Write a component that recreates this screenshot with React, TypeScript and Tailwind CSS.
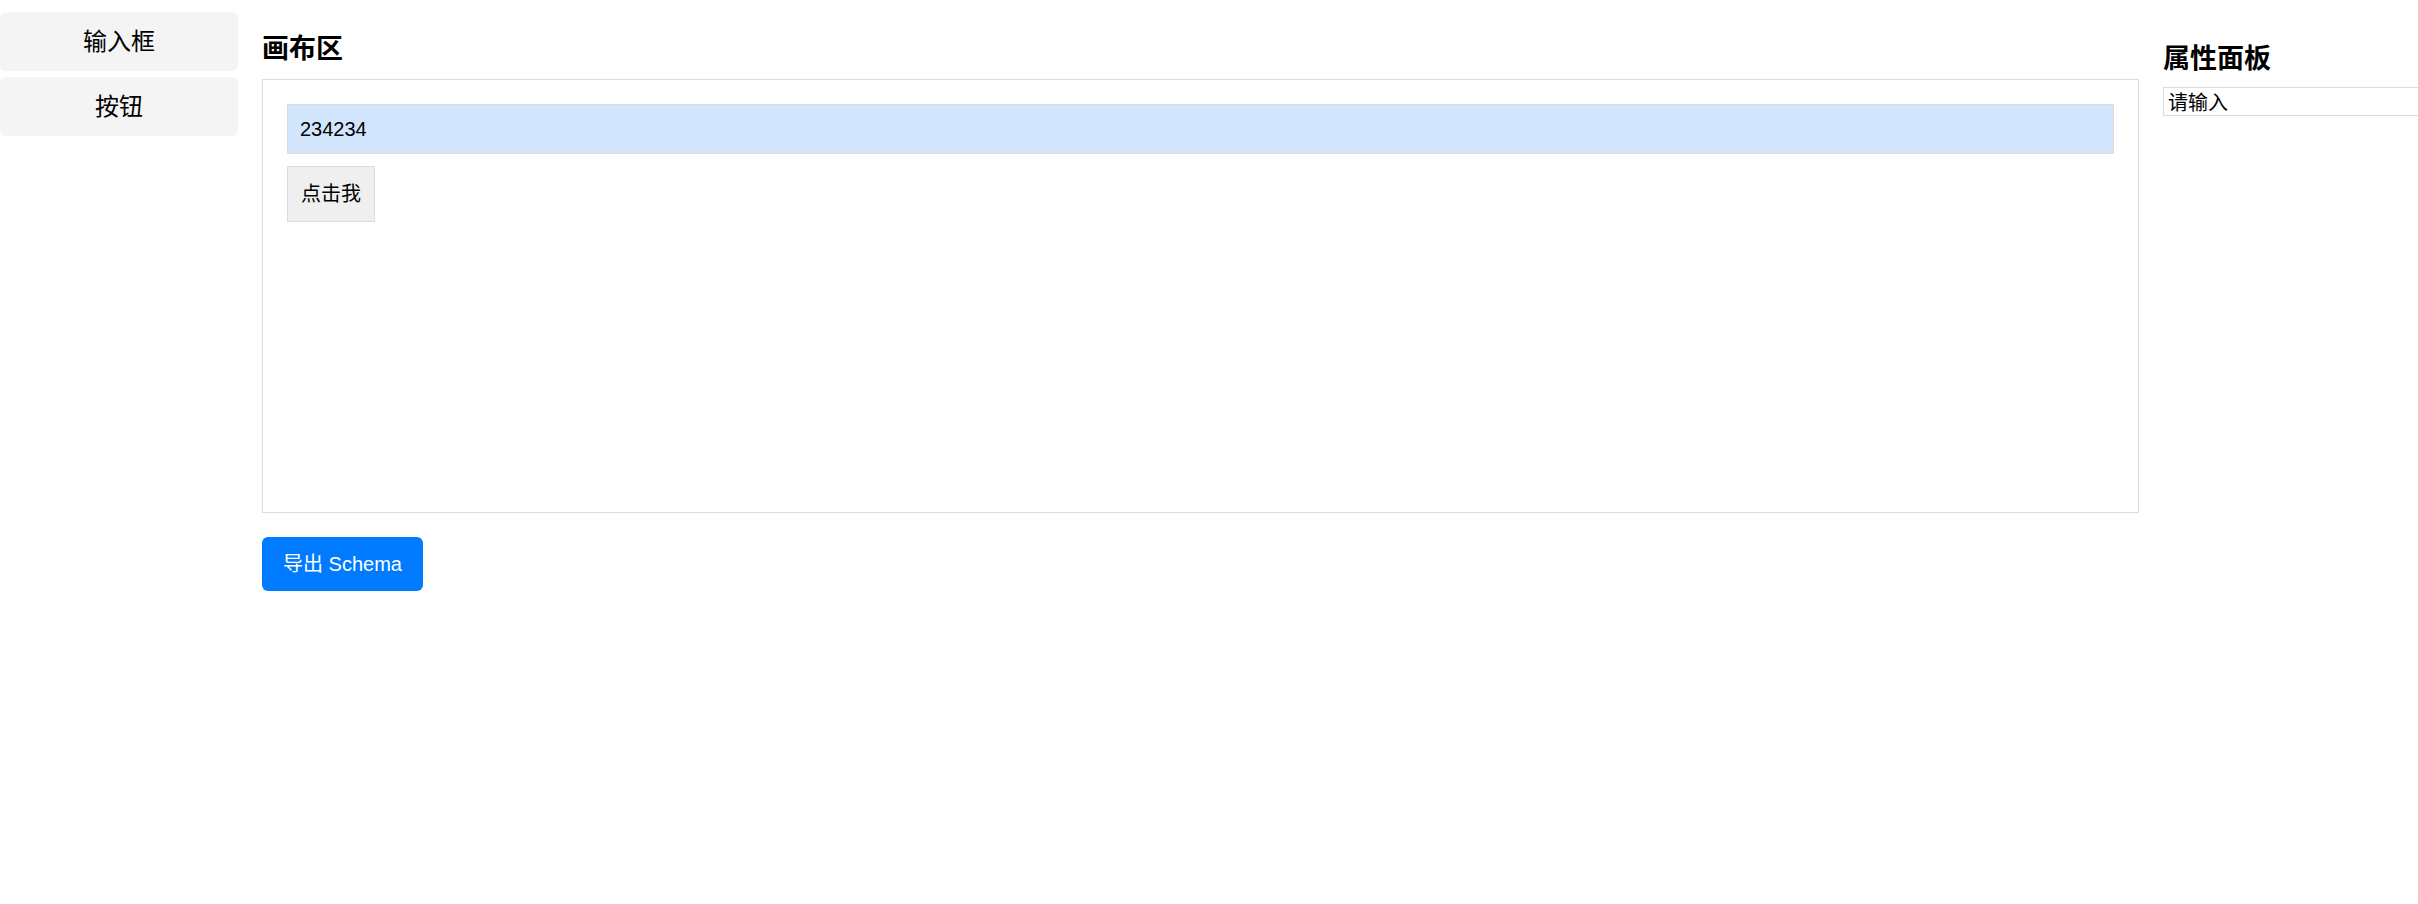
import { useState } from "react";

const FONT = "font-['Liberation_Sans','Noto_Sans_CJK_SC',sans-serif]";

const PALETTE = ["输入框", "按钮"];

export default function App() {
  const [text, setText] = useState("234234");
  const [prop, setProp] = useState("请输入");

  return (
    <div className={`flex h-screen w-screen gap-[24px] overflow-hidden bg-white text-black ${FONT}`}>
      {/* Component palette */}
      <aside className="flex w-[238px] shrink-0 flex-col gap-[6px] pt-[12px]">
        {PALETTE.map((name) => (
          <div
            key={name}
            className="flex h-[59px] items-center justify-center rounded-[6px] bg-[#f4f4f4] text-[24px]"
          >
            {name}
          </div>
        ))}
      </aside>

      {/* Canvas */}
      <main className="flex min-w-0 flex-1 flex-col items-start">
        <h3 className="mt-[30px] mb-[10px] text-[27px] leading-[39px] font-bold">画布区</h3>
        <div className="flex h-[434px] w-full flex-col items-start gap-[12px] border-[1.5px] border-[#dcdcdc] p-[24px]">
          <input
            value={text}
            onChange={(e) => setText(e.target.value)}
            className="h-[50px] w-full border border-[#dcdcdc] bg-[#d1e6fd] px-[12px] text-[20px] outline-none"
          />
          <button
            type="button"
            className="h-[56px] border border-[#dcdcdc] bg-[#efefef] px-[13px] text-[20px]"
          >
            点击我
          </button>
        </div>
        <button
          type="button"
          className="mt-[24px] h-[54px] rounded-[6px] bg-[#007bff] px-[21px] text-[20px] text-white"
        >
          导出 Schema
        </button>
      </main>

      {/* Property panel */}
      <section className="w-[255px] shrink-0">
        <h3 className="mt-[40px] mb-[8px] text-[27px] leading-[39px] font-bold">属性面板</h3>
        <input
          value={prop}
          onChange={(e) => setProp(e.target.value)}
          className="h-[29px] w-[320px] border border-[#dcdcdc] px-[4px] text-[20px] leading-[27px] outline-none"
        />
      </section>
    </div>
  );
}
